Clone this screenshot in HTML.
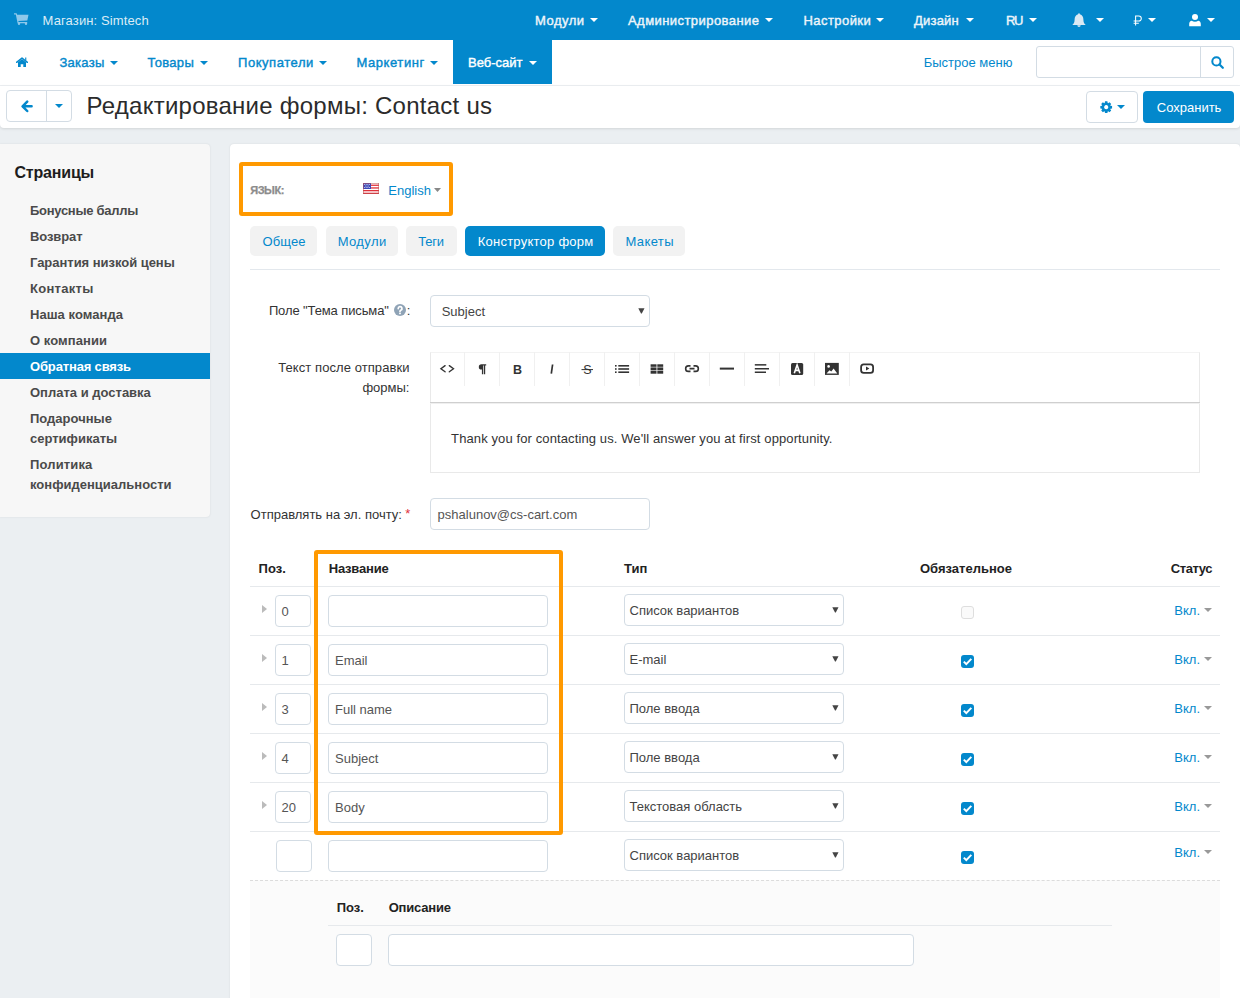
<!DOCTYPE html>
<html><head><meta charset="utf-8"><style>
*{box-sizing:border-box;margin:0;padding:0}
html,body{width:1240px;height:998px;overflow:hidden}
body{font-family:"Liberation Sans",sans-serif;font-size:13px;color:#333;background:#ebeff2;position:relative}
.a{position:absolute}
.t{position:absolute;white-space:nowrap}
</style></head><body>
<div class="a" style="left:0px;top:0px;width:1240px;height:40px;background:#0388cc"></div>
<svg class="a" style="left:14px;top:13px" width="15" height="12" viewBox="0 0 15 12"><path d="M0 0.2h2.6l0.6 1.6H14.5l-1.2 5.6L4.3 8l0.3 1H13.2v1.2H3.6L1.8 1.4H0z" fill="#8ec8ea"/><circle cx="5" cy="10.8" r="1.2" fill="#8ec8ea"/><circle cx="12" cy="10.8" r="1.2" fill="#8ec8ea"/></svg>
<div class="t " style="left:42.6px;top:14.00px;font-size:13px;line-height:13px;color:#dcecf6;letter-spacing:0.12px;">Магазин: Simtech</div>
<div class="t " style="left:535px;top:14.00px;font-size:13px;line-height:13px;color:#eef5fa;-webkit-text-stroke:0.4px #eef5fa;letter-spacing:0.48px;">Модули</div>
<svg class="a" style="left:590px;top:18px" width="8" height="4" viewBox="0 0 8 4"><path d="M0 0H8L4.0 4z" fill="#fff"/></svg>
<div class="t " style="left:628px;top:14.00px;font-size:13px;line-height:13px;color:#eef5fa;-webkit-text-stroke:0.4px #eef5fa;letter-spacing:0.44px;">Администрирование</div>
<svg class="a" style="left:765px;top:18px" width="8" height="4" viewBox="0 0 8 4"><path d="M0 0H8L4.0 4z" fill="#fff"/></svg>
<div class="t " style="left:803.5px;top:14.00px;font-size:13px;line-height:13px;color:#eef5fa;-webkit-text-stroke:0.4px #eef5fa;letter-spacing:0.44px;">Настройки</div>
<svg class="a" style="left:876px;top:18px" width="8" height="4" viewBox="0 0 8 4"><path d="M0 0H8L4.0 4z" fill="#fff"/></svg>
<div class="t " style="left:914px;top:14.00px;font-size:13px;line-height:13px;color:#eef5fa;-webkit-text-stroke:0.4px #eef5fa;letter-spacing:0.2px;">Дизайн</div>
<svg class="a" style="left:966px;top:18px" width="8" height="4" viewBox="0 0 8 4"><path d="M0 0H8L4.0 4z" fill="#fff"/></svg>
<div class="t " style="left:1006px;top:14.00px;font-size:13px;line-height:13px;color:#eef5fa;-webkit-text-stroke:0.4px #eef5fa;letter-spacing:-1.5px;">RU</div>
<svg class="a" style="left:1029px;top:18px" width="8" height="4" viewBox="0 0 8 4"><path d="M0 0H8L4.0 4z" fill="#fff"/></svg>
<svg class="a" style="left:1072px;top:13px" width="14" height="14" viewBox="0 0 14 14"><path d="M7 0.3c0.6 0 0.9 0.4 0.9 0.9C10.3 1.8 11.4 3.8 11.4 6.8c0 2.8 0.9 3.9 2.3 5.1H0.3C1.7 10.7 2.6 9.6 2.6 6.8c0-3 1.1-5 3.5-5.6C6.1 0.7 6.4 0.3 7 0.3z" fill="#dbe9f3"/><path d="M5.3 12.3h3.4a1.7 1.7 0 0 1-3.4 0z" fill="#dbe9f3"/></svg>
<svg class="a" style="left:1096px;top:18px" width="8" height="4" viewBox="0 0 8 4"><path d="M0 0H8L4.0 4z" fill="#fff"/></svg>
<svg class="a" style="left:1133px;top:15px" width="10" height="11" viewBox="0 0 10 11"><path d="M2.6 10.6V1h3.2a2.5 2.5 0 0 1 0 5H0.6M0.6 8.2h5.2" stroke="#fff" stroke-width="1.05" fill="none"/></svg>
<svg class="a" style="left:1148px;top:18px" width="8" height="4" viewBox="0 0 8 4"><path d="M0 0H8L4.0 4z" fill="#fff"/></svg>
<svg class="a" style="left:1189px;top:14px" width="12" height="13" viewBox="0 0 12 13"><circle cx="6" cy="3" r="3" fill="#fff"/><path d="M0.2 12.2V10c0-1.8 1-3 2.6-3.2 0.9 0.6 1.9 0.9 3.2 0.9s2.3-0.3 3.2-0.9C10.8 7 11.8 8.2 11.8 10v2.2z" fill="#fff"/></svg>
<svg class="a" style="left:1207px;top:18px" width="8" height="4" viewBox="0 0 8 4"><path d="M0 0H8L4.0 4z" fill="#fff"/></svg>
<div class="a" style="left:0px;top:40px;width:1240px;height:45px;background:#fff"></div>
<div class="a" style="left:0px;top:85px;width:1240px;height:1px;background:#eceff2"></div>
<div class="a" style="left:453px;top:40px;width:99px;height:44px;background:#0388cc"></div>
<svg class="a" style="left:16px;top:57px" width="12" height="10" viewBox="0 0 12 10"><path d="M0.6 5.3L6 1l5.4 4.3" stroke="#0388cc" stroke-width="1.5" fill="none" stroke-linecap="round" stroke-linejoin="round"/><path d="M9.2 0.6h1.1v3.2l-1.1-0.9z" fill="#0388cc"/><path d="M2 5.2L6 2.1l4 3.1V9.9H7.3V7.2H4.7V9.9H2z" fill="#0388cc"/></svg>
<div class="t " style="left:59.4px;top:56.00px;font-size:13px;line-height:13px;color:#0388cc;-webkit-text-stroke:0.4px #0388cc;letter-spacing:0.3px;">Заказы</div>
<svg class="a" style="left:110px;top:61px" width="8" height="4" viewBox="0 0 8 4"><path d="M0 0H8L4.0 4z" fill="#0388cc"/></svg>
<div class="t " style="left:147.5px;top:56.00px;font-size:13px;line-height:13px;color:#0388cc;-webkit-text-stroke:0.4px #0388cc;letter-spacing:0.3px;">Товары</div>
<svg class="a" style="left:200px;top:61px" width="8" height="4" viewBox="0 0 8 4"><path d="M0 0H8L4.0 4z" fill="#0388cc"/></svg>
<div class="t " style="left:238px;top:56.00px;font-size:13px;line-height:13px;color:#0388cc;-webkit-text-stroke:0.4px #0388cc;letter-spacing:0.55px;">Покупатели</div>
<svg class="a" style="left:319px;top:61px" width="8" height="4" viewBox="0 0 8 4"><path d="M0 0H8L4.0 4z" fill="#0388cc"/></svg>
<div class="t " style="left:356.5px;top:56.00px;font-size:13px;line-height:13px;color:#0388cc;-webkit-text-stroke:0.4px #0388cc;letter-spacing:0.56px;">Маркетинг</div>
<svg class="a" style="left:430px;top:61px" width="8" height="4" viewBox="0 0 8 4"><path d="M0 0H8L4.0 4z" fill="#0388cc"/></svg>
<div class="t " style="left:468px;top:56.00px;font-size:13px;line-height:13px;color:#fff;-webkit-text-stroke:0.4px #fff;letter-spacing:0px;">Веб-сайт</div>
<svg class="a" style="left:529px;top:61px" width="8" height="4" viewBox="0 0 8 4"><path d="M0 0H8L4.0 4z" fill="#fff"/></svg>
<div class="t " style="left:923.7px;top:56.00px;font-size:13px;line-height:13px;color:#0388cc;letter-spacing:0px;">Быстрое меню</div>
<div class="a" style="left:1036px;top:46px;width:198px;height:32px;border:1px solid #d3dce4;border-radius:3px;background:#fff"></div>
<div class="a" style="left:1200px;top:46px;width:1px;height:32px;background:#d3dce4"></div>
<svg class="a" style="left:1211px;top:56px" width="13" height="13" viewBox="0 0 13 13"><circle cx="5.4" cy="5.4" r="4.1" stroke="#0388cc" stroke-width="2" fill="none"/><path d="M8.5 8.5l3.3 3.3" stroke="#0388cc" stroke-width="2.2" stroke-linecap="round"/></svg>
<div class="a" style="left:0px;top:86px;width:1240px;height:42px;background:#fff;border-radius:0 0 4px 4px;box-shadow:0 1px 3px rgba(0,0,0,.11)"></div>
<div class="a" style="left:6px;top:90px;width:66px;height:32px;border:1px solid #d3dce4;border-radius:4px;background:#fff"></div>
<div class="a" style="left:46px;top:90px;width:1px;height:32px;background:#d3dce4"></div>
<svg class="a" style="left:21px;top:100px" width="12" height="13" viewBox="0 0 12 13"><path d="M6.2 1.6L1.6 6.3l4.6 4.7M2 6.3h8.6" stroke="#0388cc" stroke-width="2.5" fill="none" stroke-linecap="round" stroke-linejoin="round"/></svg>
<svg class="a" style="left:55px;top:104px" width="8" height="4" viewBox="0 0 8 4"><path d="M0 0H8L4.0 4z" fill="#0388cc"/></svg>
<div class="t " style="left:86.5px;top:93.68px;font-size:24px;line-height:24px;color:#2b2b2b;letter-spacing:0.25px;">Редактирование формы: Contact us</div>
<div class="a" style="left:1086px;top:91px;width:52px;height:32px;border:1px solid #d3dce4;border-radius:4px;background:#fff"></div>
<svg class="a" style="left:1100px;top:100.6px" width="13" height="13" viewBox="0 0 13 13"><path d="M10.44 4.70 L12.08 5.01 L12.08 7.39 L10.44 7.70 L10.26 8.14 L11.20 9.52 L9.52 11.20 L8.14 10.26 L7.70 10.44 L7.39 12.08 L5.01 12.08 L4.70 10.44 L4.26 10.26 L2.88 11.20 L1.20 9.52 L2.14 8.14 L1.96 7.70 L0.32 7.39 L0.32 5.01 L1.96 4.70 L2.14 4.26 L1.20 2.88 L2.88 1.20 L4.26 2.14 L4.70 1.96 L5.01 0.32 L7.39 0.32 L7.70 1.96 L8.14 2.14 L9.52 1.20 L11.20 2.88 L10.26 4.26Z M6.20 4.10a2.1 2.1 0 1 0 0.01 0z" fill="#0388cc" fill-rule="evenodd"/></svg>
<svg class="a" style="left:1117px;top:105px" width="8" height="4" viewBox="0 0 8 4"><path d="M0 0H8L4.0 4z" fill="#0388cc"/></svg>
<div class="a" style="left:1143px;top:91px;width:91px;height:32px;background:#0388cc;border-radius:4px"></div>
<div class="t " style="left:1156.8px;top:101.00px;font-size:13px;line-height:13px;color:#fff;letter-spacing:0px;">Сохранить</div>
<div class="a" style="left:0px;top:144px;width:210px;height:373px;background:#f7f7f7;border-radius:0 4px 4px 0;box-shadow:0 0 2px rgba(0,0,0,.10)"></div>
<div class="t " style="left:14.5px;top:164.96px;font-size:16px;line-height:16px;color:#1d1d1d;font-weight:bold;letter-spacing:-0.19px;">Страницы</div>
<div class="a" style="left:0px;top:353px;width:210px;height:26px;background:#0388cc"></div>
<div class="t " style="left:30px;top:204.00px;font-size:13px;line-height:13px;color:#4a4a4a;font-weight:bold;letter-spacing:-0.28px;">Бонусные баллы</div>
<div class="t " style="left:30px;top:230.00px;font-size:13px;line-height:13px;color:#4a4a4a;font-weight:bold;letter-spacing:-0.1px;">Возврат</div>
<div class="t " style="left:30px;top:256.00px;font-size:13px;line-height:13px;color:#4a4a4a;font-weight:bold;letter-spacing:-0.03px;">Гарантия низкой цены</div>
<div class="t " style="left:30px;top:282.00px;font-size:13px;line-height:13px;color:#4a4a4a;font-weight:bold;letter-spacing:0.28px;">Контакты</div>
<div class="t " style="left:30px;top:308.00px;font-size:13px;line-height:13px;color:#4a4a4a;font-weight:bold;letter-spacing:0.05px;">Наша команда</div>
<div class="t " style="left:30px;top:334.00px;font-size:13px;line-height:13px;color:#4a4a4a;font-weight:bold;letter-spacing:0.07px;">О компании</div>
<div class="t " style="left:30px;top:360.00px;font-size:13px;line-height:13px;color:#fff;font-weight:bold;letter-spacing:-0.15px;">Обратная связь</div>
<div class="t " style="left:30px;top:386.00px;font-size:13px;line-height:13px;color:#4a4a4a;font-weight:bold;letter-spacing:0px;">Оплата и доставка</div>
<div class="t " style="left:30px;top:412.00px;font-size:13px;line-height:13px;color:#4a4a4a;font-weight:bold;letter-spacing:0px;">Подарочные</div>
<div class="t " style="left:30px;top:432.00px;font-size:13px;line-height:13px;color:#4a4a4a;font-weight:bold;letter-spacing:0px;">сертификаты</div>
<div class="t " style="left:30px;top:458.00px;font-size:13px;line-height:13px;color:#4a4a4a;font-weight:bold;letter-spacing:0.14px;">Политика</div>
<div class="t " style="left:30px;top:478.00px;font-size:13px;line-height:13px;color:#4a4a4a;font-weight:bold;letter-spacing:0px;">конфиденциальности</div>
<div class="a" style="left:230px;top:144px;width:1010px;height:870px;background:#fff;border-radius:4px 4px 0 0;box-shadow:0 0 2px rgba(0,0,0,.10)"></div>
<div class="a" style="left:239px;top:162px;width:214px;height:54px;border:4px solid #ff9900;border-radius:3px"></div>
<div class="t " style="left:250.2px;top:185.19px;font-size:11px;line-height:11px;color:#8c8c8c;font-weight:bold;letter-spacing:-0.45px;-webkit-text-stroke:0.25px #8c8c8c;">ЯЗЫК:</div>
<svg class="a" style="left:363px;top:183px" width="16" height="11" viewBox="0 0 16 11"><rect x="0" y="0" width="16" height="11" fill="#fff"/><rect y="1.6" width="16" height="1.3" fill="#e0303a"/><rect y="4.3" width="16" height="1.3" fill="#e0303a"/><rect y="7" width="16" height="1.3" fill="#e0303a"/><rect y="9.7" width="16" height="1.3" fill="#e0303a"/><rect x="0" y="0" width="8" height="6" fill="#3a47b8"/><g fill="#fff"><circle cx="1.8" cy="1.5" r=".55"/><circle cx="4" cy="1.5" r=".55"/><circle cx="6.2" cy="1.5" r=".55"/><circle cx="2.9" cy="3" r=".55"/><circle cx="5.1" cy="3" r=".55"/><circle cx="1.8" cy="4.5" r=".55"/><circle cx="4" cy="4.5" r=".55"/><circle cx="6.2" cy="4.5" r=".55"/></g><rect x="0.25" y="0.25" width="15.5" height="10.5" fill="none" stroke="#b55" stroke-width="0.5"/></svg>
<div class="t " style="left:388.3px;top:184.00px;font-size:13px;line-height:13px;color:#0388cc;letter-spacing:0px;">English</div>
<svg class="a" style="left:434px;top:188px" width="7" height="4" viewBox="0 0 7 4"><path d="M0 0H7L3.5 4z" fill="#888"/></svg>
<div class="a" style="left:250px;top:226px;width:67px;height:30px;background:#f2f2f2;border-radius:5px"></div>
<div class="t " style="left:262.6px;top:235.00px;font-size:13px;line-height:13px;color:#0388cc;letter-spacing:0.1px;">Общее</div>
<div class="a" style="left:325.6px;top:226px;width:72.1px;height:30px;background:#f2f2f2;border-radius:5px"></div>
<div class="t " style="left:337.7px;top:235.00px;font-size:13px;line-height:13px;color:#0388cc;letter-spacing:0.38px;">Модули</div>
<div class="a" style="left:406.2px;top:226px;width:50.4px;height:30px;background:#f2f2f2;border-radius:5px"></div>
<div class="t " style="left:418.3px;top:235.00px;font-size:13px;line-height:13px;color:#0388cc;letter-spacing:-0.25px;">Теги</div>
<div class="a" style="left:465.3px;top:226px;width:139.5px;height:30px;background:#0388cc;border-radius:5px"></div>
<div class="t " style="left:477.7px;top:235.00px;font-size:13px;line-height:13px;color:#fff;letter-spacing:0.25px;">Конструктор форм</div>
<div class="a" style="left:613.1px;top:226px;width:71.7px;height:30px;background:#f2f2f2;border-radius:5px"></div>
<div class="t " style="left:625.4px;top:235.00px;font-size:13px;line-height:13px;color:#0388cc;letter-spacing:0.4px;">Макеты</div>
<div class="a" style="left:250px;top:269px;width:970px;height:1px;background:#e3e8ed"></div>
<div class="t " style="left:268.9px;top:304.00px;font-size:13px;line-height:13px;color:#333;letter-spacing:-0.11px;">Поле "Тема письма"</div>
<svg class="a" style="left:394px;top:303.5px" width="12" height="12" viewBox="0 0 12 12"><circle cx="6" cy="6" r="6" fill="#8fa3b6"/><path d="M4.2 4.6a1.9 1.9 0 1 1 2.6 1.7c-.5.3-.8.5-.8 1.2" stroke="#fff" stroke-width="1.7" fill="none" stroke-linecap="round"/><circle cx="6" cy="9.4" r=".95" fill="#fff"/></svg>
<div class="t " style="left:406.8px;top:304.00px;font-size:13px;line-height:13px;color:#333;">:</div>
<div class="a" style="left:430px;top:295px;width:220px;height:32px;border:1px solid #d3dce4;border-radius:4px;background:#fff"></div>
<div class="t " style="left:441.7px;top:305.00px;font-size:13px;line-height:13px;color:#444;letter-spacing:0px;">Subject</div>
<svg class="a" style="left:638px;top:308px" width="7" height="6" viewBox="0 0 7 6"><path d="M0.3 0.2H6.5L3.8 5.4H3z" fill="#444"/></svg>
<div class="t " style="left:278.2px;top:361.00px;font-size:13px;line-height:13px;color:#333;letter-spacing:0.08px;">Текст после отправки</div>
<div class="t " style="left:362.4px;top:381.00px;font-size:13px;line-height:13px;color:#333;letter-spacing:0px;">формы:</div>
<div class="a" style="left:430px;top:352px;width:770px;height:121px;border:1px solid #e9e9e9;border-top:1px solid #f3f3f3;background:#fff"></div>
<div class="a" style="left:430px;top:402px;width:770px;height:1px;background:#cfcfcf"></div>
<div class="a" style="left:430px;top:403px;width:770px;height:1px;background:#efefef"></div>
<div class="a" style="left:464px;top:352px;width:1px;height:34px;background:#f0f0f0"></div>
<div class="a" style="left:499px;top:352px;width:1px;height:34px;background:#f0f0f0"></div>
<div class="a" style="left:534px;top:352px;width:1px;height:34px;background:#f0f0f0"></div>
<div class="a" style="left:569px;top:352px;width:1px;height:34px;background:#f0f0f0"></div>
<div class="a" style="left:604px;top:352px;width:1px;height:34px;background:#f0f0f0"></div>
<div class="a" style="left:639px;top:352px;width:1px;height:34px;background:#f0f0f0"></div>
<div class="a" style="left:674px;top:352px;width:1px;height:34px;background:#f0f0f0"></div>
<div class="a" style="left:709px;top:352px;width:1px;height:34px;background:#f0f0f0"></div>
<div class="a" style="left:744px;top:352px;width:1px;height:34px;background:#f0f0f0"></div>
<div class="a" style="left:779px;top:352px;width:1px;height:34px;background:#f0f0f0"></div>
<div class="a" style="left:814px;top:352px;width:1px;height:34px;background:#f0f0f0"></div>
<div class="a" style="left:849px;top:352px;width:1px;height:34px;background:#f0f0f0"></div>
<svg class="a" style="left:430px;top:355px" width="470" height="25" viewBox="0 0 470 25"><path d="M15.1 10.6L10.9 13.7L15.1 16.8M19.3 10.6L23.5 13.7L19.3 16.8" stroke="#333" stroke-width="1.35" fill="none" stroke-linecap="round" stroke-linejoin="miter"/><path d="M51.5 9.2H56.2V10.6H55.2V19.2H53.9V10.6H53.2V19.2H51.9V14.6H51.5A2.7 2.7 0 0 1 51.5 9.2Z" fill="#333"/><text x="83" y="18.8" font-family="Liberation Sans" font-weight="bold" font-size="12.5" fill="#333">B</text><path d="M122.6 9.5L121.3 18.7" stroke="#333" stroke-width="1.7"/><text x="153.2" y="18.8" font-family="Liberation Sans" font-size="12.5" fill="#333">S</text><path d="M151.5 14.6H163" stroke="#333" stroke-width="1"/><rect x="185" y="10.0" width="1.6" height="1.6" fill="#333"/><rect x="188.3" y="10.0" width="10.8" height="1.6" fill="#333"/><rect x="185" y="13.2" width="1.6" height="1.6" fill="#333"/><rect x="188.3" y="13.2" width="10.8" height="1.6" fill="#333"/><rect x="185" y="16.4" width="1.6" height="1.6" fill="#333"/><rect x="188.3" y="16.4" width="10.8" height="1.6" fill="#333"/><rect x="220.6" y="9.3" width="12.6" height="9.4" fill="#333"/><path d="M226.9 9V19" stroke="#fff" stroke-width="0.8"/><path d="M220 12.2H234M220 15.5H234" stroke="#fff" stroke-width="0.6"/><path d="M260.5 10.9H258.4A2.7 2.7 0 0 0 258.4 16.4H260.5M263.5 10.9H265.6A2.7 2.7 0 0 1 265.6 16.4H263.5M259.5 13.65H264.5" stroke="#333" stroke-width="1.6" fill="none"/><rect x="289.8" y="12.6" width="14.2" height="2" fill="#333"/><rect x="324.8" y="9.1" width="11.5" height="1.5" fill="#333"/><rect x="324.8" y="13" width="14.2" height="1.5" fill="#333"/><rect x="324.8" y="16.5" width="11.2" height="1.5" fill="#333"/><rect x="361" y="7.9" width="12.2" height="12" rx="1.5" fill="#333"/><path d="M364.3 18.2L367.1 10L369.9 18.2M365.2 15.4H369" stroke="#fff" stroke-width="1.6" fill="none"/><rect x="395" y="7.9" width="13.8" height="12" fill="#333"/><circle cx="398.6" cy="11.4" r="1.3" fill="#fff"/><path d="M396.5 18.4L399.5 15.2L401.3 16.6L403.6 13.6L407.3 18.4Z" fill="#fff"/><rect x="431.1" y="9.3" width="12" height="8.6" rx="2.6" stroke="#333" stroke-width="1.8" fill="none"/><path d="M436 11.6L439.4 13.6L436 15.6Z" fill="#333"/></svg>
<div class="t " style="left:451.1px;top:432.00px;font-size:13px;line-height:13px;color:#333;letter-spacing:0.11px;">Thank you for contacting us. We'll answer you at first opportunity.</div>
<div class="t " style="left:250.6px;top:507.50px;font-size:13px;line-height:13px;color:#333;letter-spacing:0px;">Отправлять на эл. почту:</div>
<div class="t " style="left:405.2px;top:507.00px;font-size:13px;line-height:13px;color:#e0303a;">*</div>
<div class="a" style="left:430px;top:498px;width:220px;height:32px;border:1px solid #d3dce4;border-radius:4px;background:#fff"></div>
<div class="t " style="left:437.6px;top:508.00px;font-size:13px;line-height:13px;color:#555;letter-spacing:0px;">pshalunov@cs-cart.com</div>
<div class="t " style="left:258.6px;top:562.00px;font-size:13px;line-height:13px;color:#222;font-weight:bold;letter-spacing:0px;">Поз.</div>
<div class="t " style="left:328.7px;top:562.00px;font-size:13px;line-height:13px;color:#222;font-weight:bold;letter-spacing:-0.2px;">Название</div>
<div class="t " style="left:624px;top:562.00px;font-size:13px;line-height:13px;color:#222;font-weight:bold;letter-spacing:0px;">Тип</div>
<div class="t " style="left:920px;top:562.00px;font-size:13px;line-height:13px;color:#222;font-weight:bold;letter-spacing:0px;">Обязательное</div>
<div class="t" style="left:1012px;width:200px;text-align:right;top:562.00px;font-size:13px;line-height:13px;font-weight:bold;color:#222;letter-spacing:-0.44px">Статус</div>
<div class="a" style="left:250px;top:586px;width:970px;height:1px;background:#e6e9ec"></div>
<svg class="a" style="left:262px;top:605px" width="5" height="8" viewBox="0 0 5 8"><path d="M0 0L5 4L0 8z" fill="#bbb"/></svg>
<div class="a" style="left:275px;top:595px;width:36px;height:32px;border:1px solid #d3dce4;border-radius:4px;background:#fff"></div>
<div class="t " style="left:281.5px;top:605.00px;font-size:13px;line-height:13px;color:#555;letter-spacing:0px;">0</div>
<div class="a" style="left:328px;top:595px;width:220px;height:32px;border:1px solid #d3dce4;border-radius:4px;background:#fff"></div>
<div class="a" style="left:624px;top:594px;width:220px;height:32px;border:1px solid #d3dce4;border-radius:4px;background:#fff"></div>
<div class="t " style="left:629.5px;top:604.00px;font-size:13px;line-height:13px;color:#444;letter-spacing:0px;">Список вариантов</div>
<svg class="a" style="left:832px;top:607px" width="7" height="6" viewBox="0 0 7 6"><path d="M0.3 0.2H6.5L3.8 5.4H3z" fill="#444"/></svg>
<div class="a" style="left:961px;top:606px;width:12.5px;height:12.5px;border:1px solid #dedede;border-radius:3px;background:#fafafa"></div>
<div class="t" style="left:1000px;width:200px;text-align:right;top:604.00px;font-size:13px;line-height:13px;color:#0388cc;letter-spacing:0px">Вкл.</div>
<svg class="a" style="left:1204px;top:608px" width="8" height="4" viewBox="0 0 8 4"><path d="M0 0H8L4.0 4z" fill="#999"/></svg>
<div class="a" style="left:250px;top:635px;width:970px;height:1px;background:#e6e9ec"></div>
<svg class="a" style="left:262px;top:654px" width="5" height="8" viewBox="0 0 5 8"><path d="M0 0L5 4L0 8z" fill="#bbb"/></svg>
<div class="a" style="left:275px;top:644px;width:36px;height:32px;border:1px solid #d3dce4;border-radius:4px;background:#fff"></div>
<div class="t " style="left:281.5px;top:654.00px;font-size:13px;line-height:13px;color:#555;letter-spacing:0px;">1</div>
<div class="a" style="left:328px;top:644px;width:220px;height:32px;border:1px solid #d3dce4;border-radius:4px;background:#fff"></div>
<div class="t " style="left:335px;top:654.00px;font-size:13px;line-height:13px;color:#555;letter-spacing:0px;">Email</div>
<div class="a" style="left:624px;top:643px;width:220px;height:32px;border:1px solid #d3dce4;border-radius:4px;background:#fff"></div>
<div class="t " style="left:629.5px;top:653.00px;font-size:13px;line-height:13px;color:#444;letter-spacing:0px;">E-mail</div>
<svg class="a" style="left:832px;top:656px" width="7" height="6" viewBox="0 0 7 6"><path d="M0.3 0.2H6.5L3.8 5.4H3z" fill="#444"/></svg>
<div class="a" style="left:961px;top:655.0px;width:13px;height:13px;background:#0388cc;border-radius:3px"></div>
<svg class="a" style="left:961px;top:655px" width="13" height="13" viewBox="0 0 13 13"><path d="M2.8 6.6L5.3 9.1L10.3 3.9" stroke="#fff" stroke-width="2" fill="none"/></svg>
<div class="t" style="left:1000px;width:200px;text-align:right;top:653.00px;font-size:13px;line-height:13px;color:#0388cc;letter-spacing:0px">Вкл.</div>
<svg class="a" style="left:1204px;top:657px" width="8" height="4" viewBox="0 0 8 4"><path d="M0 0H8L4.0 4z" fill="#999"/></svg>
<div class="a" style="left:250px;top:684px;width:970px;height:1px;background:#e6e9ec"></div>
<svg class="a" style="left:262px;top:703px" width="5" height="8" viewBox="0 0 5 8"><path d="M0 0L5 4L0 8z" fill="#bbb"/></svg>
<div class="a" style="left:275px;top:693px;width:36px;height:32px;border:1px solid #d3dce4;border-radius:4px;background:#fff"></div>
<div class="t " style="left:281.5px;top:703.00px;font-size:13px;line-height:13px;color:#555;letter-spacing:0px;">3</div>
<div class="a" style="left:328px;top:693px;width:220px;height:32px;border:1px solid #d3dce4;border-radius:4px;background:#fff"></div>
<div class="t " style="left:335px;top:703.00px;font-size:13px;line-height:13px;color:#555;letter-spacing:0px;">Full name</div>
<div class="a" style="left:624px;top:692px;width:220px;height:32px;border:1px solid #d3dce4;border-radius:4px;background:#fff"></div>
<div class="t " style="left:629.5px;top:702.00px;font-size:13px;line-height:13px;color:#444;letter-spacing:0px;">Поле ввода</div>
<svg class="a" style="left:832px;top:705px" width="7" height="6" viewBox="0 0 7 6"><path d="M0.3 0.2H6.5L3.8 5.4H3z" fill="#444"/></svg>
<div class="a" style="left:961px;top:704.0px;width:13px;height:13px;background:#0388cc;border-radius:3px"></div>
<svg class="a" style="left:961px;top:704px" width="13" height="13" viewBox="0 0 13 13"><path d="M2.8 6.6L5.3 9.1L10.3 3.9" stroke="#fff" stroke-width="2" fill="none"/></svg>
<div class="t" style="left:1000px;width:200px;text-align:right;top:702.00px;font-size:13px;line-height:13px;color:#0388cc;letter-spacing:0px">Вкл.</div>
<svg class="a" style="left:1204px;top:706px" width="8" height="4" viewBox="0 0 8 4"><path d="M0 0H8L4.0 4z" fill="#999"/></svg>
<div class="a" style="left:250px;top:733px;width:970px;height:1px;background:#e6e9ec"></div>
<svg class="a" style="left:262px;top:752px" width="5" height="8" viewBox="0 0 5 8"><path d="M0 0L5 4L0 8z" fill="#bbb"/></svg>
<div class="a" style="left:275px;top:742px;width:36px;height:32px;border:1px solid #d3dce4;border-radius:4px;background:#fff"></div>
<div class="t " style="left:281.5px;top:752.00px;font-size:13px;line-height:13px;color:#555;letter-spacing:0px;">4</div>
<div class="a" style="left:328px;top:742px;width:220px;height:32px;border:1px solid #d3dce4;border-radius:4px;background:#fff"></div>
<div class="t " style="left:335px;top:752.00px;font-size:13px;line-height:13px;color:#555;letter-spacing:0px;">Subject</div>
<div class="a" style="left:624px;top:741px;width:220px;height:32px;border:1px solid #d3dce4;border-radius:4px;background:#fff"></div>
<div class="t " style="left:629.5px;top:751.00px;font-size:13px;line-height:13px;color:#444;letter-spacing:0px;">Поле ввода</div>
<svg class="a" style="left:832px;top:754px" width="7" height="6" viewBox="0 0 7 6"><path d="M0.3 0.2H6.5L3.8 5.4H3z" fill="#444"/></svg>
<div class="a" style="left:961px;top:753.0px;width:13px;height:13px;background:#0388cc;border-radius:3px"></div>
<svg class="a" style="left:961px;top:753px" width="13" height="13" viewBox="0 0 13 13"><path d="M2.8 6.6L5.3 9.1L10.3 3.9" stroke="#fff" stroke-width="2" fill="none"/></svg>
<div class="t" style="left:1000px;width:200px;text-align:right;top:751.00px;font-size:13px;line-height:13px;color:#0388cc;letter-spacing:0px">Вкл.</div>
<svg class="a" style="left:1204px;top:755px" width="8" height="4" viewBox="0 0 8 4"><path d="M0 0H8L4.0 4z" fill="#999"/></svg>
<div class="a" style="left:250px;top:782px;width:970px;height:1px;background:#e6e9ec"></div>
<svg class="a" style="left:262px;top:801px" width="5" height="8" viewBox="0 0 5 8"><path d="M0 0L5 4L0 8z" fill="#bbb"/></svg>
<div class="a" style="left:275px;top:791px;width:36px;height:32px;border:1px solid #d3dce4;border-radius:4px;background:#fff"></div>
<div class="t " style="left:281.5px;top:801.00px;font-size:13px;line-height:13px;color:#555;letter-spacing:0px;">20</div>
<div class="a" style="left:328px;top:791px;width:220px;height:32px;border:1px solid #d3dce4;border-radius:4px;background:#fff"></div>
<div class="t " style="left:335px;top:801.00px;font-size:13px;line-height:13px;color:#555;letter-spacing:0px;">Body</div>
<div class="a" style="left:624px;top:790px;width:220px;height:32px;border:1px solid #d3dce4;border-radius:4px;background:#fff"></div>
<div class="t " style="left:629.5px;top:800.00px;font-size:13px;line-height:13px;color:#444;letter-spacing:0px;">Текстовая область</div>
<svg class="a" style="left:832px;top:803px" width="7" height="6" viewBox="0 0 7 6"><path d="M0.3 0.2H6.5L3.8 5.4H3z" fill="#444"/></svg>
<div class="a" style="left:961px;top:802.0px;width:13px;height:13px;background:#0388cc;border-radius:3px"></div>
<svg class="a" style="left:961px;top:802px" width="13" height="13" viewBox="0 0 13 13"><path d="M2.8 6.6L5.3 9.1L10.3 3.9" stroke="#fff" stroke-width="2" fill="none"/></svg>
<div class="t" style="left:1000px;width:200px;text-align:right;top:800.00px;font-size:13px;line-height:13px;color:#0388cc;letter-spacing:0px">Вкл.</div>
<svg class="a" style="left:1204px;top:804px" width="8" height="4" viewBox="0 0 8 4"><path d="M0 0H8L4.0 4z" fill="#999"/></svg>
<div class="a" style="left:250px;top:831px;width:970px;height:1px;background:#e6e9ec"></div>
<div class="a" style="left:276px;top:840px;width:36px;height:32px;border:1px solid #d3dce4;border-radius:4px;background:#fff"></div>
<div class="a" style="left:328px;top:840px;width:220px;height:32px;border:1px solid #d3dce4;border-radius:4px;background:#fff"></div>
<div class="a" style="left:624px;top:839px;width:220px;height:32px;border:1px solid #d3dce4;border-radius:4px;background:#fff"></div>
<div class="t " style="left:629.5px;top:849.00px;font-size:13px;line-height:13px;color:#444;letter-spacing:0px;">Список вариантов</div>
<svg class="a" style="left:832px;top:852px" width="7" height="6" viewBox="0 0 7 6"><path d="M0.3 0.2H6.5L3.8 5.4H3z" fill="#444"/></svg>
<div class="a" style="left:961px;top:851px;width:13px;height:13px;background:#0388cc;border-radius:3px"></div>
<svg class="a" style="left:961px;top:851px" width="13" height="13" viewBox="0 0 13 13"><path d="M2.8 6.6L5.3 9.1L10.3 3.9" stroke="#fff" stroke-width="2" fill="none"/></svg>
<div class="t" style="left:1000px;width:200px;text-align:right;top:846.00px;font-size:13px;line-height:13px;color:#0388cc;letter-spacing:0px">Вкл.</div>
<svg class="a" style="left:1204px;top:850px" width="8" height="4" viewBox="0 0 8 4"><path d="M0 0H8L4.0 4z" fill="#999"/></svg>
<div class="a" style="left:250px;top:880px;width:970px;height:118px;background:#fbfbfb;border-top:1px dashed #dcdcdc"></div>
<div class="t " style="left:336.7px;top:901.00px;font-size:13px;line-height:13px;color:#222;font-weight:bold;letter-spacing:0px;">Поз.</div>
<div class="t " style="left:388.7px;top:901.00px;font-size:13px;line-height:13px;color:#222;font-weight:bold;letter-spacing:-0.2px;">Описание</div>
<div class="a" style="left:328px;top:925px;width:784px;height:1px;background:#e6e9ec"></div>
<div class="a" style="left:336px;top:934px;width:36px;height:32px;border:1px solid #d3dce4;border-radius:4px;background:#fff"></div>
<div class="a" style="left:388px;top:934px;width:526px;height:32px;border:1px solid #d3dce4;border-radius:4px;background:#fff"></div>
<div class="a" style="left:314px;top:550px;width:249px;height:285px;border:4px solid #ff9900;border-radius:3px"></div>
</body></html>
